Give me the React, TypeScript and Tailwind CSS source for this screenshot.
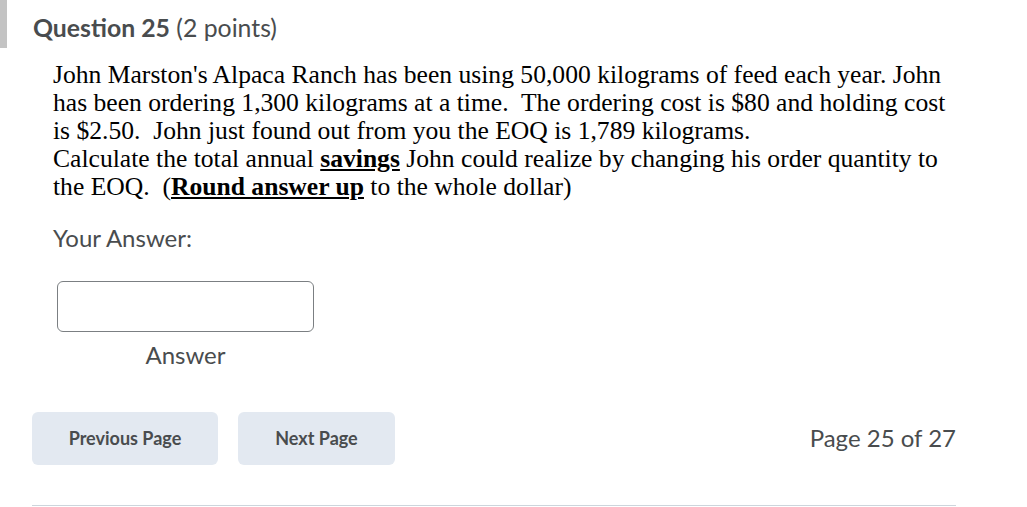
import React from 'react';

const App: React.FC = () => {
  return (
    <div className="relative w-[1027px] h-[507px] overflow-hidden bg-white font-['Lato',sans-serif] text-[#494c4e]">
      <div className="absolute left-0 top-0 w-[7px] h-[48px] bg-[#c3c3c3]"></div>

      <div className="pl-[32px] pt-[13px] w-[956px]">
        <h2 className="pl-px text-[24.8px] leading-[30px]">
          <span className="font-bold">Question 25</span> <span>(2 points)</span>
        </h2>

        <div className="pl-[21px] pt-[18px] font-['Liberation_Serif',serif] text-[25.6px] leading-[28px] text-black whitespace-nowrap">
          <p>
            John Marston's Alpaca Ranch has been using 50,000 kilograms of feed each year. John
            <br />
            has been ordering 1,300 kilograms at a time.&nbsp; The ordering cost is $80 and holding cost
            <br />
            is $2.50.&nbsp; John just found out from you the EOQ is 1,789 kilograms.
          </p>
          <p>
            Calculate the total annual <span className="font-bold underline">savings</span> John could realize by
            changing his order quantity to
            <br />
            the EOQ.&nbsp; (<span className="font-bold underline">Round answer up</span> to the whole dollar)
          </p>
        </div>

        <div className="pl-[21px] pt-[24px] text-[24px] leading-[26px]">Your Answer:</div>

        <div className="pl-[25px] pt-[30px] w-[282px] flex flex-col items-center">
          <input
            type="text"
            className="w-[257px] h-[51px] border border-[#7b7f82] rounded-[6px] bg-white"
          />
          <div className="pt-[10px] text-[24px] leading-[26px]">Answer</div>
        </div>

        <div className="flex items-center pt-[44px]">
          <button className="w-[186px] h-[53px] rounded-[6px] bg-[#e3e9f1] text-[18px] font-bold text-[#494c4e]">
            Previous Page
          </button>
          <button className="ml-[20px] w-[157px] h-[53px] rounded-[6px] bg-[#e3e9f1] text-[18px] font-bold text-[#494c4e]">
            Next Page
          </button>
          <div className="ml-auto pb-[2px] text-[24px] leading-[28px]">Page 25 of 27</div>
        </div>

        <div className="mt-[40px] h-px bg-[#cdd5dc]"></div>
      </div>
    </div>
  );
};

export default App;
